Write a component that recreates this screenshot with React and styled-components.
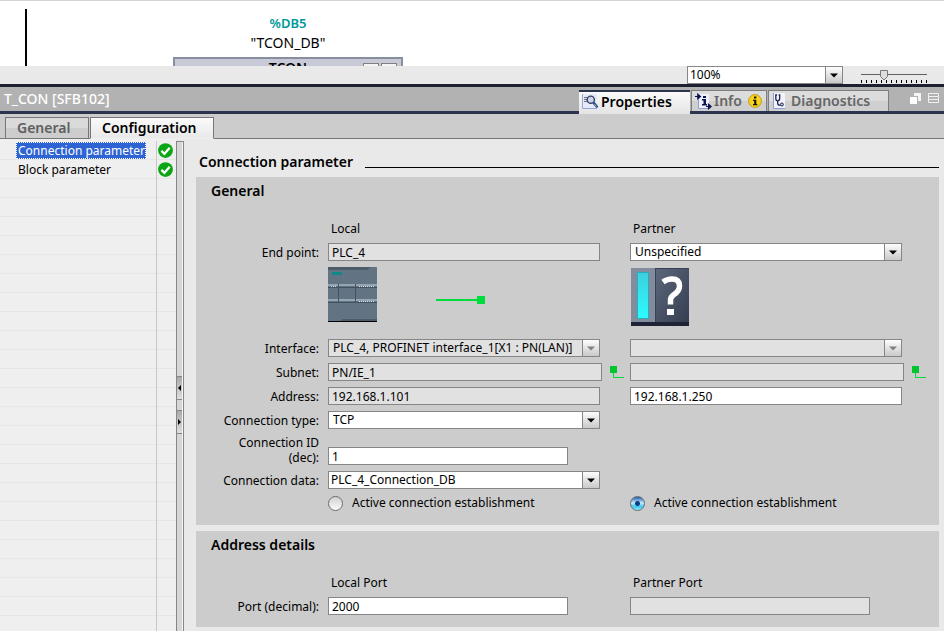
import React, { useState } from "react";
import styled, { createGlobalStyle, css } from "styled-components";

const GlobalStyle = createGlobalStyle`
  *, *::before, *::after { box-sizing: border-box; }
  body {
    margin: 0;
    background: #e9e9e9;
    color: #000;
    font: 12px/18px "Noto Sans", sans-serif;
  }
  button, input, select { font: inherit; color: inherit; margin: 0; border-radius: 0; }
`;

const Page = styled.div`
  display: flex;
  flex-direction: column;
  min-height: 100vh;
`;

/* ---------- network editor ---------- */

const Editor = styled.section`
  display: flex;
  height: 66px;
  overflow: hidden;
  padding-left: 25px;
  background: #fff;
  border-top: 1px solid #d4d4d4;
`;

const PowerRail = styled.div`
  width: 2px;
  margin-top: 8px;
  background: #000;
`;

const Block = styled.div`
  width: 230px;
  margin: 13px 0 0 146px;
  text-align: center;
  line-height: 19px;
`;

const BlockAddress = styled.div`
  color: #009999;
  font-size: 13px;
  font-weight: 600;
`;

const BlockName = styled.div`
  font-size: 14px;
`;

const BlockHead = styled.div`
  display: grid;
  grid-template-columns: 42px 1fr 42px;
  height: 40px;
  margin-top: 5px;
  border: 2px solid #868e9f;
  background: #c8cad8;
  font-size: 14px;
  font-weight: 600;
  line-height: 18px;
`;

const BlockTools = styled.div`
  display: flex;
  gap: 2px;
  padding: 4px 0 0 4px;
`;

const BlockTool = styled.button`
  width: 16px;
  height: 16px;
  padding: 0;
  border: 1px solid #808080;
  background: #f4f4f4;
  font-size: 10px;
  line-height: 8px;
`;

const ZoomBar = styled.div`
  display: flex;
  justify-content: flex-end;
  align-items: flex-start;
  gap: 17px;
  height: 21px;
  padding-right: 16px;
  border-bottom: 3px solid #1b2033;
  background: #e9e9e9;
`;

const SliderBox = styled.div`
  position: relative;
  width: 68px;
  height: 18px;
  svg { display: block; }
`;

const SliderInput = styled.input`
  position: absolute;
  inset: 0;
  width: 100%;
  height: 100%;
  opacity: 0;
`;

/* ---------- inspector header ---------- */

const Inspector = styled.div`
  display: flex;
  align-items: flex-start;
  height: 27px;
  background: #b2b2b2 linear-gradient(#2d3450, #2d3450) bottom / 100% 3px no-repeat;
`;

const InspectorTitle = styled.h1`
  flex: 1;
  margin: 0;
  padding-left: 4px;
  color: #fff;
  font-size: 14px;
  font-weight: 500;
  line-height: 24px;
`;

const InspectorTabs = styled.div`
  display: flex;
  gap: 1px;
  padding-top: 3px;
`;

const InspectorTab = styled.button`
  display: flex;
  align-items: center;
  gap: 2px;
  width: ${(p) => p.$width}px;
  height: 21px;
  padding: 0 4px 0 3px;
  border: 1px solid #7d7d7d;
  border-bottom: 0;
  background: linear-gradient(#dcdcdc 50%, #cfcfcf 50%);
  color: #666;
  font-size: 14px;
  font-weight: 600;
  line-height: 20px;
  ${(p) =>
    p.$active &&
    css`
      height: 24px;
      padding-bottom: 3px;
      border: 0;
      border-top: 2px solid #2d3450;
      background: linear-gradient(#fafafa, #e4e4e4);
      color: #000;
    `}
`;

const TabBadge = styled.span`
  display: flex;
  margin-left: auto;
`;

const WindowTools = styled.div`
  display: flex;
  gap: 6px;
  padding: 5px 4px 0 19px;
`;

const WindowTool = styled.button`
  display: flex;
  width: 13px;
  height: 14px;
  padding: 0;
  border: 0;
  background: none;
`;

const PageTabs = styled.div`
  display: flex;
  align-items: flex-end;
  gap: 1px;
  height: 25px;
  padding-left: 5px;
  background: #ccc linear-gradient(#767676, #767676) bottom / 100% 1px no-repeat;
`;

const PageTab = styled.button`
  width: ${(p) => p.$width}px;
  height: 22px;
  padding: 0 0 0 11px;
  border: 1px solid #767676;
  background: linear-gradient(#dadada 50%, #cdcdcd 50%);
  color: #5f5f5f;
  font-size: 14px;
  font-weight: 600;
  line-height: 20px;
  text-align: left;
  ${(p) =>
    p.$active &&
    css`
      border-bottom-color: #efefef;
      background: linear-gradient(#fafafa, #e9e9e9);
      color: #000;
    `}
`;

/* ---------- body ---------- */

const Body = styled.div`
  display: flex;
  flex: 1;
`;

const NavPane = styled.nav`
  display: flex;
  width: 176px;
  padding-top: 2px;
  background: #efefef repeating-linear-gradient(#efefef 0 18px, #e6e6e6 18px 19px) 0 2px;
`;

const NavNames = styled.div`
  flex: 1;
  padding-left: 16px;
  border-right: 1px solid #c8c8c8;
`;

const NavRow = styled.div`
  height: 19px;
  padding-top: 1px;
`;

const NavItem = styled.button`
  display: block;
  height: 17px;
  padding: 0 0 0 1px;
  border: 1px dotted ${(p) => (p.$active ? "#fff" : "transparent")};
  background: ${(p) => (p.$active ? "#2e63d3" : "transparent")};
  color: ${(p) => (p.$active ? "#fff" : "#000")};
  line-height: 15px;
  white-space: nowrap;
`;

const StatusCell = styled.div`
  width: 19px;
  height: 19px;
  padding-top: 1px;
  svg { display: block; }
`;

const Splitter = styled.div`
  display: flex;
  flex-direction: column;
  gap: 10px;
  width: 8px;
  margin-top: 2px;
  padding-top: 234px;
  border: 1px solid #868686;
  border-bottom: 0;
  background: linear-gradient(90deg, #d6d6d6 5px, #f6f6f6 5px);
`;

const SplitterButton = styled.button`
  display: flex;
  align-items: center;
  width: 5px;
  height: 24px;
  padding: 0;
  border: solid #868686;
  border-width: 1px 0;
  background: linear-gradient(#aaa, #dedede);
`;

const Main = styled.main`
  display: flex;
  flex: 1;
  flex-direction: column;
  gap: 6px;
  min-width: 0;
  padding: 12px 5px 4px 12px;
`;

const Heading = styled.h2`
  display: flex;
  align-items: flex-start;
  gap: 12px;
  height: 20px;
  margin: 0;
  padding-left: 3px;
  font-size: 14px;
  font-weight: 600;
  line-height: 22px;
  &::after {
    content: "";
    flex: 1;
    height: 1px;
    margin-top: 16px;
    background: #000;
  }
`;

const Panel = styled.section`
  padding: 4px 0 ${(p) => p.$bottom}px;
  background: #ccc;
`;

const PanelTitle = styled.h3`
  margin: 0 0 18px;
  padding-left: 15px;
  font-size: 14px;
  font-weight: 600;
  line-height: 20px;
`;

const FormGrid = styled.div`
  display: grid;
  grid-template-columns: 126px minmax(0, 296px) minmax(0, 296px);
  column-gap: 6px;
  row-gap: 6px;
  align-items: end;
`;

const ColumnHead = styled.div`
  grid-column: ${(p) => p.$col};
  height: 18px;
  padding-left: 3px;
  line-height: 20px;
`;

const Label = styled.label`
  grid-column: 1;
  height: ${(p) => (p.$tall ? 30 : 18)}px;
  margin-left: ${(p) => (p.$tall ? 30 : 0)}px;
  padding-right: 3px;
  text-align: right;
  line-height: ${(p) => (p.$tall ? 15 : 20)}px;
`;

const fieldBox = css`
  width: 100%;
  max-width: ${(p) => p.$width || 272}px;
  height: 18px;
  border: 1px solid #868686;
  background: ${(p) => (p.$shaded ? "#e1e1e1" : "#fff")};
  color: #000;
  opacity: 1;
  outline: 0;
`;

const TextField = styled.input`
  ${fieldBox}
  display: block;
  padding: 0 3px;
  line-height: 16px;
`;

const SelectBox = styled.div`
  ${fieldBox}
  display: grid;
  grid-template-columns: minmax(0, 1fr) 17px;
`;

const Select = styled.select`
  grid-area: 1 / 1 / 2 / 3;
  width: 100%;
  height: 16px;
  padding: 0 18px 0 ${(p) => (p.$tight ? 2 : 4)}px;
  appearance: none;
  border: 0;
  outline: 0;
  background: transparent;
  color: #000;
  opacity: 1;
  line-height: 16px;
`;

const SelectArrow = styled.span`
  grid-area: 1 / 2;
  display: flex;
  align-items: center;
  justify-content: center;
  border-left: 1px solid #868686;
  background: linear-gradient(#fdfdfd, #c9c9c9);
  pointer-events: none;
`;

const SubnetCell = styled.div`
  display: flex;
  align-items: center;
  gap: 8px;
  svg { flex: none; }
`;

const PictureCell = styled.div`
  grid-column: ${(p) => p.$col};
  display: flex;
  align-items: center;
  gap: 59px;
  height: 66px;
  svg { flex: none; }
`;

const DevicePicture = styled.div`
  align-self: flex-start;
  svg { display: block; }
`;

const RadioLabel = styled.label`
  grid-column: ${(p) => p.$col};
  display: flex;
  align-items: center;
  gap: 9px;
  height: 16px;
`;

const Radio = styled.input`
  appearance: none;
  width: 15px;
  height: 15px;
  border: 1px solid #6c6c6c;
  border-radius: 50%;
  background: linear-gradient(#d2d2d2, #fafafa);
  &:checked {
    background:
      radial-gradient(circle, #0a4080 0 2px, transparent 3px),
      linear-gradient(#1e5cb0, #c4eafc 45%, #3cc4ee 75%, #8ff2ff);
  }
`;

/* ---------- drawings ---------- */

const Arrow = ({ color = "#000" }) => (
  <svg width="8" height="5" viewBox="0 0 8 5">
    <path d="M0 0.500h8L4 4.500z" fill={color} />
  </svg>
);

const CheckIcon = () => (
  <svg width="17" height="17" viewBox="0 0 17 17">
    <circle cx="8.5" cy="8.6" r="7.4" fill="#0ba614" />
    <path d="M4.4 8.9l3 2.9 5.3-6" fill="none" stroke="#fff" strokeWidth="2.3" />
  </svg>
);

const PropertiesIcon = () => (
  <svg width="17" height="17" viewBox="0 0 17 17">
    <rect x="0" y="1" width="15" height="15" fill="#e6eaf8" />
    <path d="M.5 1v14.500H15" fill="none" stroke="#98a4d8" />
    <path d="M2 4.500h4M2 6.500h3M2 8.500h4" stroke="#666f88" />
    <circle cx="8.800" cy="6.700" r="3.600" fill="#c8d6f0" stroke="#3a4056" strokeWidth="1.400" />
    <path d="M11.400 9.600l1.300 1.300" stroke="#3a4056" strokeWidth="2" />
    <path d="M12.300 10.600l2.500 2.900" stroke="#2650a0" strokeWidth="2.600" strokeLinecap="round" />
    <path d="M12.600 11.400l1.600 1.800" stroke="#e8c040" strokeWidth="1" />
  </svg>
);

const InfoIcon = () => (
  <svg width="17" height="17" viewBox="0 0 17 17">
    <rect x="3" y="1" width="11" height="14" fill="#eef0fa" />
    <path d="M3.500 5v10.500H14" fill="none" stroke="#8f9cd6" />
    <path d="M0 3.500h3M2.800 1.200l2.700 2.300-2.700 2.300zM11 13.500h3M13.500 11.200l2.700 2.300-2.700 2.300z" fill="#0c1450" stroke="#0c1450" strokeWidth="1.200" />
    <path d="M8 3h3v2H8zM7 6h4v5h1v1.500H7V11h1.500V7.500H7z" fill="#0c1450" />
  </svg>
);

const InfoBadge = () => (
  <svg width="14" height="14" viewBox="0 0 14 14">
    <circle cx="7" cy="7" r="6.400" fill="#f8d31c" stroke="#c49c10" />
    <path d="M6 2.500h2.300v2H6zM5 5.700h3.300v4.200h1v1.300H5V9.900h1.200V7H5z" fill="#1c1600" />
  </svg>
);

const DiagnosticsIcon = () => (
  <svg width="17" height="16" viewBox="-1 0 17 16">
    <rect x="0" y="0" width="12" height="15" fill="#f2f4fc" />
    <path d="M.5 0v15.500H12" fill="none" stroke="#8f9cd6" />
    <path d="M4 2H2.800v3.400q0 2.400 1.900 2.400t2-2.400V2H5.600M4.700 8v2.300q0 1.900 1.900 1.900h1.100" fill="none" stroke="#20244c" strokeWidth="1.300" />
    <circle cx="8.900" cy="11.500" r="1.500" fill="#c8cce8" stroke="#20244c" />
  </svg>
);

const FloatIcon = () => (
  <svg width="13" height="14" viewBox="0 0 13 14">
    <path d="M6 1h7v8h-3V4H6z" fill="#f4f4f4" />
    <path d="M2 5h7v7H2z" fill="#fff" />
  </svg>
);

const CollapseIcon = () => (
  <svg width="13" height="14" viewBox="0 0 13 14">
    <path d="M1.500 1.500h10v9h-10zM1 4.500h11M1 7.500h11" fill="none" stroke="#f0f0f0" />
  </svg>
);

const PlcPicture = () => (
  <svg width="49" height="55" viewBox="0 0 49 55" role="img" aria-label="PLC">
    <rect width="49" height="55" fill="#627484" />
    <path d="M0 0h43l-4 3H0z" fill="#4d5c69" />
    <rect x="4" y="5" width="10" height="3" fill="#118787" />
    <path d="M0 18h49M0 33h49" stroke="#95a5b3" strokeWidth="2" />
    <path d="M0 20.500h49M0 35.500h49M10.500 17v18M27.500 17v18" stroke="#43525f" />
    <path d="M3 19.500h6M31 19.500h16M31 34.500h16" stroke="#dde5ea" strokeDasharray="1 1" />
    <path d="M12 54l3-2h34v2z" fill="#4d5c69" />
    <rect y="54" width="49" height="1" fill="#000" />
  </svg>
);

const LinkPicture = () => (
  <svg width="49" height="8" viewBox="0 0 49 8">
    <path d="M0 3h41V0h8v8h-8V5H0z" fill="#00dc3c" />
  </svg>
);

const PartnerPicture = () => (
  <svg width="60" height="59" viewBox="0 -1 60 59" role="img" aria-label="Unspecified partner">
    <defs>
      <linearGradient id="cyan" x2="0" y2="1">
        <stop stopColor="#3cd0dc" />
        <stop offset="1" stopColor="#2cfcff" />
      </linearGradient>
      <linearGradient id="slate" x2="1" y2="1">
        <stop stopColor="#5c687c" />
        <stop offset="1" stopColor="#363e50" />
      </linearGradient>
    </defs>
    <rect x="1" width="24" height="54" fill="#828c9c" />
    <rect x="7.500" y="4.500" width="11" height="46" fill="url(#cyan)" stroke="#25aebb" />
    <rect x="25" width="34" height="54" fill="url(#slate)" />
    <path d="M25 .5h34M25.500 0v54" stroke="#394254" />
    <rect x="1" y="54" width="58" height="4" fill="#1e2435" />
    <path d="M33 14Q37 11 42 11Q49.500 11 49.500 18Q49.500 23 44 26.500Q40.500 29 40.500 32V36.500" fill="none" stroke="#fff" strokeWidth="5.500" />
    <rect x="37" y="41" width="7" height="6" fill="#fff" />
  </svg>
);

const SubnetMark = () => (
  <svg width="14" height="12" viewBox="0 0 14 12">
    <path d="M3.500 6v5.500H14" fill="none" stroke="#00d83a" />
    <rect width="7" height="7" fill="#02c42f" />
  </svg>
);

/* ---------- pieces ---------- */

const Dropdown = ({ id, label, options = [], shaded, width, tight, arrowMuted }) => (
  <SelectBox $shaded={shaded} $width={width}>
    <Select id={id} aria-label={label} disabled={shaded} $tight={tight}>
      {options.map((o) => (
        <option key={o}>{o}</option>
      ))}
    </Select>
    <SelectArrow>
      <Arrow color={arrowMuted ? "#808080" : "#000"} />
    </SelectArrow>
  </SelectBox>
);

const ZoomSlider = () => {
  const [value, setValue] = useState(32);
  const x = 3 + Math.round(value * 0.54);
  return (
    <SliderBox>
      <svg width="68" height="18" viewBox="0 0 68 18">
        <path d="M1 8.500h66" stroke="#606060" />
        <path d="M1 15.500h66" stroke="#000" strokeWidth="3" strokeDasharray="1 4" />
        <path d={`M${x + 0.5} 4.500h7v6l-3.500 3.500-3.500-3.500z`} fill="#dedede" stroke="#777" />
      </svg>
      <SliderInput
        type="range"
        aria-label="Zoom"
        value={value}
        onChange={(e) => setValue(Number(e.target.value))}
      />
    </SliderBox>
  );
};

export default function App() {
  const [side, setSide] = useState("partner");
  return (
    <Page>
      <GlobalStyle />
      <Editor>
        <PowerRail />
        <Block>
          <BlockAddress>%DB5</BlockAddress>
          <BlockName>"TCON_DB"</BlockName>
          <BlockHead>
            <span />
            <span>TCON</span>
            <BlockTools>
              <BlockTool aria-label="Diagnose" />
              <BlockTool aria-label="Configure">"</BlockTool>
            </BlockTools>
          </BlockHead>
        </Block>
      </Editor>
      <ZoomBar>
        <Dropdown label="Zoom level" options={["100%"]} width={156} tight />
        <ZoomSlider />
      </ZoomBar>

      <Inspector>
        <InspectorTitle>T_CON [SFB102]</InspectorTitle>
        <InspectorTabs>
          <InspectorTab $width={111} $active>
            <PropertiesIcon />
            Properties
          </InspectorTab>
          <InspectorTab $width={76}>
            <InfoIcon />
            Info
            <TabBadge><InfoBadge /></TabBadge>
          </InspectorTab>
          <InspectorTab $width={121}>
            <DiagnosticsIcon />
            Diagnostics
          </InspectorTab>
        </InspectorTabs>
        <WindowTools>
          <WindowTool aria-label="Float window"><FloatIcon /></WindowTool>
          <WindowTool aria-label="Collapse window"><CollapseIcon /></WindowTool>
        </WindowTools>
      </Inspector>

      <PageTabs>
        <PageTab $width={84}>General</PageTab>
        <PageTab $width={124} $active>Configuration</PageTab>
      </PageTabs>

      <Body>
        <NavPane>
          <NavNames>
            <NavRow><NavItem $active>Connection parameter</NavItem></NavRow>
            <NavRow><NavItem>Block parameter</NavItem></NavRow>
          </NavNames>
          <div>
            <StatusCell><CheckIcon /></StatusCell>
            <StatusCell><CheckIcon /></StatusCell>
          </div>
        </NavPane>
        <Splitter>
          <SplitterButton aria-label="Collapse left">
            <svg width="5" height="6" viewBox="0 0 5 6"><path d="M4 0v6L1 3z" /></svg>
          </SplitterButton>
          <SplitterButton aria-label="Expand right">
            <svg width="5" height="6" viewBox="0 0 5 6"><path d="M1 0v6l3-3z" /></svg>
          </SplitterButton>
        </Splitter>

        <Main>
          <Heading>Connection parameter</Heading>
          <Panel $bottom={14}>
            <PanelTitle>General</PanelTitle>
            <FormGrid>
              <ColumnHead $col={2}>Local</ColumnHead>
              <ColumnHead $col={3}>Partner</ColumnHead>

              <Label htmlFor="endpoint">End point:</Label>
              <TextField id="endpoint" defaultValue="PLC_4" readOnly $shaded />
              <Dropdown label="Partner end point" options={["Unspecified"]} />

              <PictureCell $col={2}>
                <DevicePicture><PlcPicture /></DevicePicture>
                <LinkPicture />
              </PictureCell>
              <PictureCell $col={3}>
                <DevicePicture><PartnerPicture /></DevicePicture>
              </PictureCell>

              <Label htmlFor="interface">Interface:</Label>
              <Dropdown
                id="interface"
                options={["PLC_4, PROFINET interface_1[X1 : PN(LAN)]"]}
                shaded
                arrowMuted
              />
              <Dropdown label="Partner interface" shaded arrowMuted />

              <Label htmlFor="subnet">Subnet:</Label>
              <SubnetCell>
                <TextField id="subnet" defaultValue="PN/IE_1" readOnly $shaded $width={274} />
                <SubnetMark />
              </SubnetCell>
              <SubnetCell>
                <TextField aria-label="Partner subnet" readOnly $shaded $width={274} />
                <SubnetMark />
              </SubnetCell>

              <Label htmlFor="address">Address:</Label>
              <TextField id="address" defaultValue="192.168.1.101" readOnly $shaded />
              <TextField aria-label="Partner address" defaultValue="192.168.1.250" />

              <Label htmlFor="type">Connection type:</Label>
              <Dropdown id="type" options={["TCP"]} />

              <Label htmlFor="cid" $tall>Connection ID (dec):</Label>
              <TextField id="cid" defaultValue="1" $width={240} />

              <Label htmlFor="cdata">Connection data:</Label>
              <Dropdown id="cdata" options={["PLC_4_Connection_DB"]} tight />

              <RadioLabel $col={2}>
                <Radio type="radio" name="side" checked={side === "local"} onChange={() => setSide("local")} />
                Active connection establishment
              </RadioLabel>
              <RadioLabel $col={3}>
                <Radio type="radio" name="side" checked={side === "partner"} onChange={() => setSide("partner")} />
                Active connection establishment
              </RadioLabel>
            </FormGrid>
          </Panel>
          <Panel $bottom={12}>
            <PanelTitle>Address details</PanelTitle>
            <FormGrid>
              <ColumnHead $col={2}>Local Port</ColumnHead>
              <ColumnHead $col={3}>Partner Port</ColumnHead>
              <Label htmlFor="port">Port (decimal):</Label>
              <TextField id="port" defaultValue="2000" $width={240} />
              <TextField aria-label="Partner port" readOnly $shaded $width={240} />
            </FormGrid>
          </Panel>
        </Main>
      </Body>
    </Page>
  );
}
